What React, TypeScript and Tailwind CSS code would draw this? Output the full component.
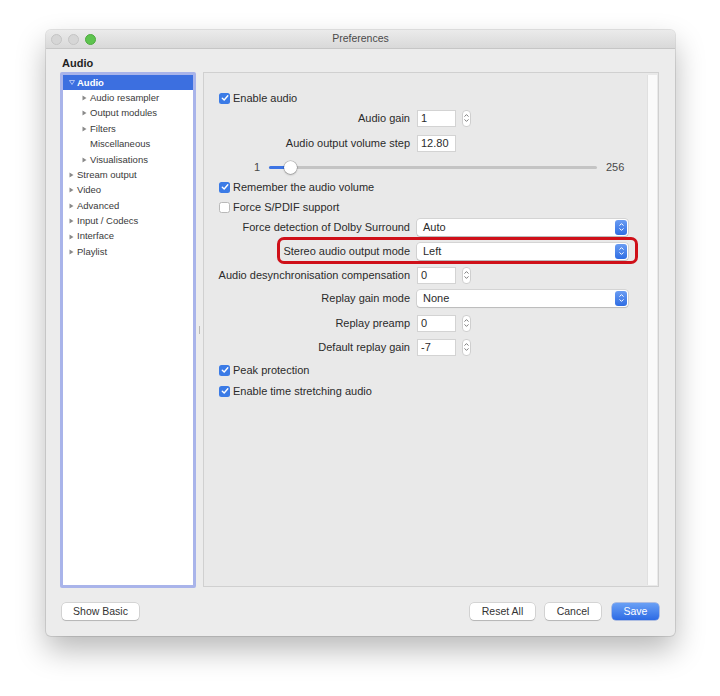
import { ReactNode } from "react"

const font = { fontFamily: '"Liberation Sans", Arial, sans-serif' }

type TreeItem = { label: string; level: number; arrow?: boolean; open?: boolean; selected?: boolean }

const tree: TreeItem[] = [
  { label: "Audio", level: 0, arrow: true, open: true, selected: true },
  { label: "Audio resampler", level: 1, arrow: true },
  { label: "Output modules", level: 1, arrow: true },
  { label: "Filters", level: 1, arrow: true },
  { label: "Miscellaneous", level: 1 },
  { label: "Visualisations", level: 1, arrow: true },
  { label: "Stream output", level: 0, arrow: true },
  { label: "Video", level: 0, arrow: true },
  { label: "Advanced", level: 0, arrow: true },
  { label: "Input / Codecs", level: 0, arrow: true },
  { label: "Interface", level: 0, arrow: true },
  { label: "Playlist", level: 0, arrow: true },
]

const Checkbox = ({ checked }: { checked?: boolean }) =>
  checked ? (
    <span className="w-[11px] h-[11px] rounded-[2.5px] bg-[#3b7be6] flex items-center justify-center shrink-0">
      <svg width="8" height="8" viewBox="0 0 8 8">
        <path d="M1.3 4.2 L3.2 6 L6.8 1.8" fill="none" stroke="white" strokeWidth="1.4" strokeLinecap="round" strokeLinejoin="round" />
      </svg>
    </span>
  ) : (
    <span className="w-[11px] h-[11px] rounded-[2.5px] bg-white border border-[#b9b9b9] shrink-0" />
  )

const CheckRow = ({ label, checked, h }: { label: string; checked?: boolean; h: string }) => (
  <div className={`flex items-center gap-[3px] pl-[15px] ${h}`}>
    <Checkbox checked={checked} />
    <span className="text-[11px] text-[#2b2b2b]">{label}</span>
  </div>
)

const Spinner = () => (
  <span className="ml-[6px] w-[9px] h-[17px] rounded-[4px] bg-white border border-[#cfcfcf] flex flex-col items-center justify-center gap-[2px]">
    <svg width="5" height="3" viewBox="0 0 5 3"><path d="M0.5 2.6 L2.5 0.6 L4.5 2.6" fill="none" stroke="#6d6d6d" strokeWidth="0.9" /></svg>
    <svg width="5" height="3" viewBox="0 0 5 3"><path d="M0.5 0.4 L2.5 2.4 L4.5 0.4" fill="none" stroke="#6d6d6d" strokeWidth="0.9" /></svg>
  </span>
)

const NumberField = ({ value, spinner = true }: { value: string; spinner?: boolean }) => (
  <div className="flex items-center">
    <span className="w-[39px] h-[17px] bg-white border border-[#d3d3d3] text-[11px] text-[#2b2b2b] pl-[3px] leading-[15px]">{value}</span>
    {spinner && <Spinner />}
  </div>
)

const SelectBox = ({ value }: { value: string }) => (
  <div className="w-[211px] h-[17px] bg-white rounded-[3px] shadow-[0_0_0_0.5px_rgba(0,0,0,0.18),0_1px_1px_rgba(0,0,0,0.12)] flex items-center justify-between">
    <span className="text-[11px] text-[#2b2b2b] pl-[6px]">{value}</span>
    <span className="w-[12px] h-[15px] mr-[1px] rounded-[3px] bg-gradient-to-b from-[#6a9cf2] to-[#2f6de3] flex flex-col items-center justify-center gap-[2px]">
      <svg width="5" height="3" viewBox="0 0 5 3"><path d="M0.5 2.6 L2.5 0.6 L4.5 2.6" fill="none" stroke="white" strokeWidth="1" /></svg>
      <svg width="5" height="3" viewBox="0 0 5 3"><path d="M0.5 0.4 L2.5 2.4 L4.5 0.4" fill="none" stroke="white" strokeWidth="1" /></svg>
    </span>
  </div>
)

const FieldRow = ({ label, h, children }: { label: string; h: string; children: ReactNode }) => (
  <div className={`flex items-center pl-[12px] ${h}`}>
    <span className="w-[194px] text-right text-[11px] text-[#2b2b2b]">{label}</span>
    <div className="ml-[7px]">{children}</div>
  </div>
)

const Button = ({ children, primary, w }: { children: ReactNode; primary?: boolean; w: string }) => (
  <button
    className={`${w} h-[17px] rounded-[4px] text-[10.5px] leading-none flex items-center justify-center ${
      primary
        ? "bg-gradient-to-b from-[#6aa0f5] to-[#2d6ae4] text-white shadow-[0_0_0_0.5px_rgba(30,80,200,0.6)]"
        : "bg-white text-[#333] shadow-[0_0_0_0.5px_rgba(0,0,0,0.2),0_1px_1px_rgba(0,0,0,0.15)]"
    }`}
  >
    {children}
  </button>
)

const Sidebar = () => (
  <div className="w-[136px] h-[516px] rounded-[2px] border-[3px] border-[#a9b4ea] bg-white">
    {tree.map((item) => (
      <div
        key={item.label}
        className={`h-[15.4px] flex items-center text-[9.5px] ${
          item.selected ? "bg-[#3c6fe0] text-white font-bold" : "text-[#3a3a3a]"
        } ${item.level === 0 ? "pl-[6px]" : "pl-[19px]"}`}
      >
        <span className="w-[8px] flex items-center">
          {item.arrow &&
            (item.open ? (
              <svg width="6" height="5" viewBox="0 0 6 5"><path d="M0.5 0.5 L5.5 0.5 L3 4.5 Z" fill="none" stroke="#c9d6f7" strokeWidth="0.8" /></svg>
            ) : (
              <svg width="5" height="6" viewBox="0 0 5 6"><path d="M0.5 0.5 L4.5 3 L0.5 5.5 Z" fill="#8a8a8a" /></svg>
            ))}
        </span>
        <span>{item.label}</span>
      </div>
    ))}
  </div>
)

const AudioPanel = () => (
  <div className="w-[456px] h-[515px] border border-[#d0d0d0] bg-[#e9e9e9] flex">
    <div className="flex-1 pt-[15px]">
      <CheckRow label="Enable audio" checked h="h-[20px]" />
      <FieldRow label="Audio gain" h="h-[20px]">
        <NumberField value="1" />
      </FieldRow>
      <FieldRow label="Audio output volume step" h="h-[30px]">
        <NumberField value="12.80" spinner={false} />
      </FieldRow>
      {/* volume slider */}
      <div className="h-[19px] flex items-center pl-[50px] text-[11px] text-[#4a4a4a]">
        <span className="w-[15px]">1</span>
        <div className="relative w-[328px] h-[3px] rounded-full bg-[#c4c4c4]">
          <div className="absolute left-0 top-0 h-[3px] w-[18px] rounded-full bg-[#3d74e4]" />
          <div className="absolute left-[15px] top-[-5px] w-[13px] h-[13px] rounded-full bg-white shadow-[0_0_0_0.5px_rgba(0,0,0,0.25),0_1px_2px_rgba(0,0,0,0.25)]" />
        </div>
        <span className="ml-[9px]">256</span>
      </div>
      <CheckRow label="Remember the audio volume" checked h="h-[20px]" />
      <CheckRow label="Force S/PDIF support" h="h-[20px]" />
      <FieldRow label="Force detection of Dolby Surround" h="h-[20px]">
        <SelectBox value="Auto" />
      </FieldRow>
      <div className="relative">
        <FieldRow label="Stereo audio output mode" h="h-[28px]">
          <SelectBox value="Left" />
        </FieldRow>
        <div className="absolute left-[73px] top-[0px] w-[361px] h-[27px] rounded-[7px] border-[3px] border-[#cf1019]" />
      </div>
      <FieldRow label="Audio desynchronisation compensation" h="h-[20px]">
        <NumberField value="0" />
      </FieldRow>
      <FieldRow label="Replay gain mode" h="h-[26px]">
        <SelectBox value="None" />
      </FieldRow>
      <FieldRow label="Replay preamp" h="h-[24px]">
        <NumberField value="0" />
      </FieldRow>
      <FieldRow label="Default replay gain" h="h-[24px]">
        <NumberField value="-7" />
      </FieldRow>
      <CheckRow label="Peak protection" checked h="h-[22px]" />
      <CheckRow label="Enable time stretching audio" checked h="h-[20px]" />
    </div>
    {/* scroll track */}
    <div className="w-[10px] mt-[2px] mb-[1px] mr-[1px] bg-[#fafafa] border-l border-[#e0e0e0]" />
  </div>
)

export default function App() {
  return (
    <div className="w-[720px] h-[696px] bg-white pt-[30px] pl-[46px]" style={font}>
      <div className="w-[629px] h-[606px] bg-[#ececec] rounded-[5px] shadow-[0_14px_30px_rgba(0,0,0,0.28),0_0_0_1px_rgba(0,0,0,0.1)] flex flex-col overflow-hidden">
        {/* title bar */}
        <div className="relative h-[19px] bg-gradient-to-b from-[#ebebeb] to-[#d9d9d9] border-b border-[#c6c6c6] flex items-center justify-center">
          <div className="absolute left-[5px] top-[4px] flex gap-[6px]">
            <span className="w-[11px] h-[11px] rounded-full bg-[#d6d6d6] border border-[#c4c4c4]" />
            <span className="w-[11px] h-[11px] rounded-full bg-[#d6d6d6] border border-[#c4c4c4]" />
            <span className="w-[11px] h-[11px] rounded-full bg-[#5ec44f] border border-[#4eaa3f]" />
          </div>
          <span className="text-[10.5px] text-[#4a4a4a]">Preferences</span>
        </div>

        <div className="pl-[16px] pt-[6px] h-[23px] text-[11px] font-bold text-[#1f1f1f]">Audio</div>

        <div className="flex pl-[14px]">
          <Sidebar />
          <div className="w-[7px] flex items-center justify-center">
            <span className="w-[1px] h-[8px] bg-[#b8b8b8]" />
          </div>
          <AudioPanel />
        </div>

        <div className="flex items-center mt-[15px] pl-[16px] pr-[16px]">
          <Button w="w-[77px]">Show Basic</Button>
          <div className="flex-1" />
          <Button w="w-[65px]">Reset All</Button>
          <div className="w-[10px]" />
          <Button w="w-[56px]">Cancel</Button>
          <div className="w-[11px]" />
          <Button primary w="w-[47px]">Save</Button>
        </div>
      </div>
    </div>
  )
}
